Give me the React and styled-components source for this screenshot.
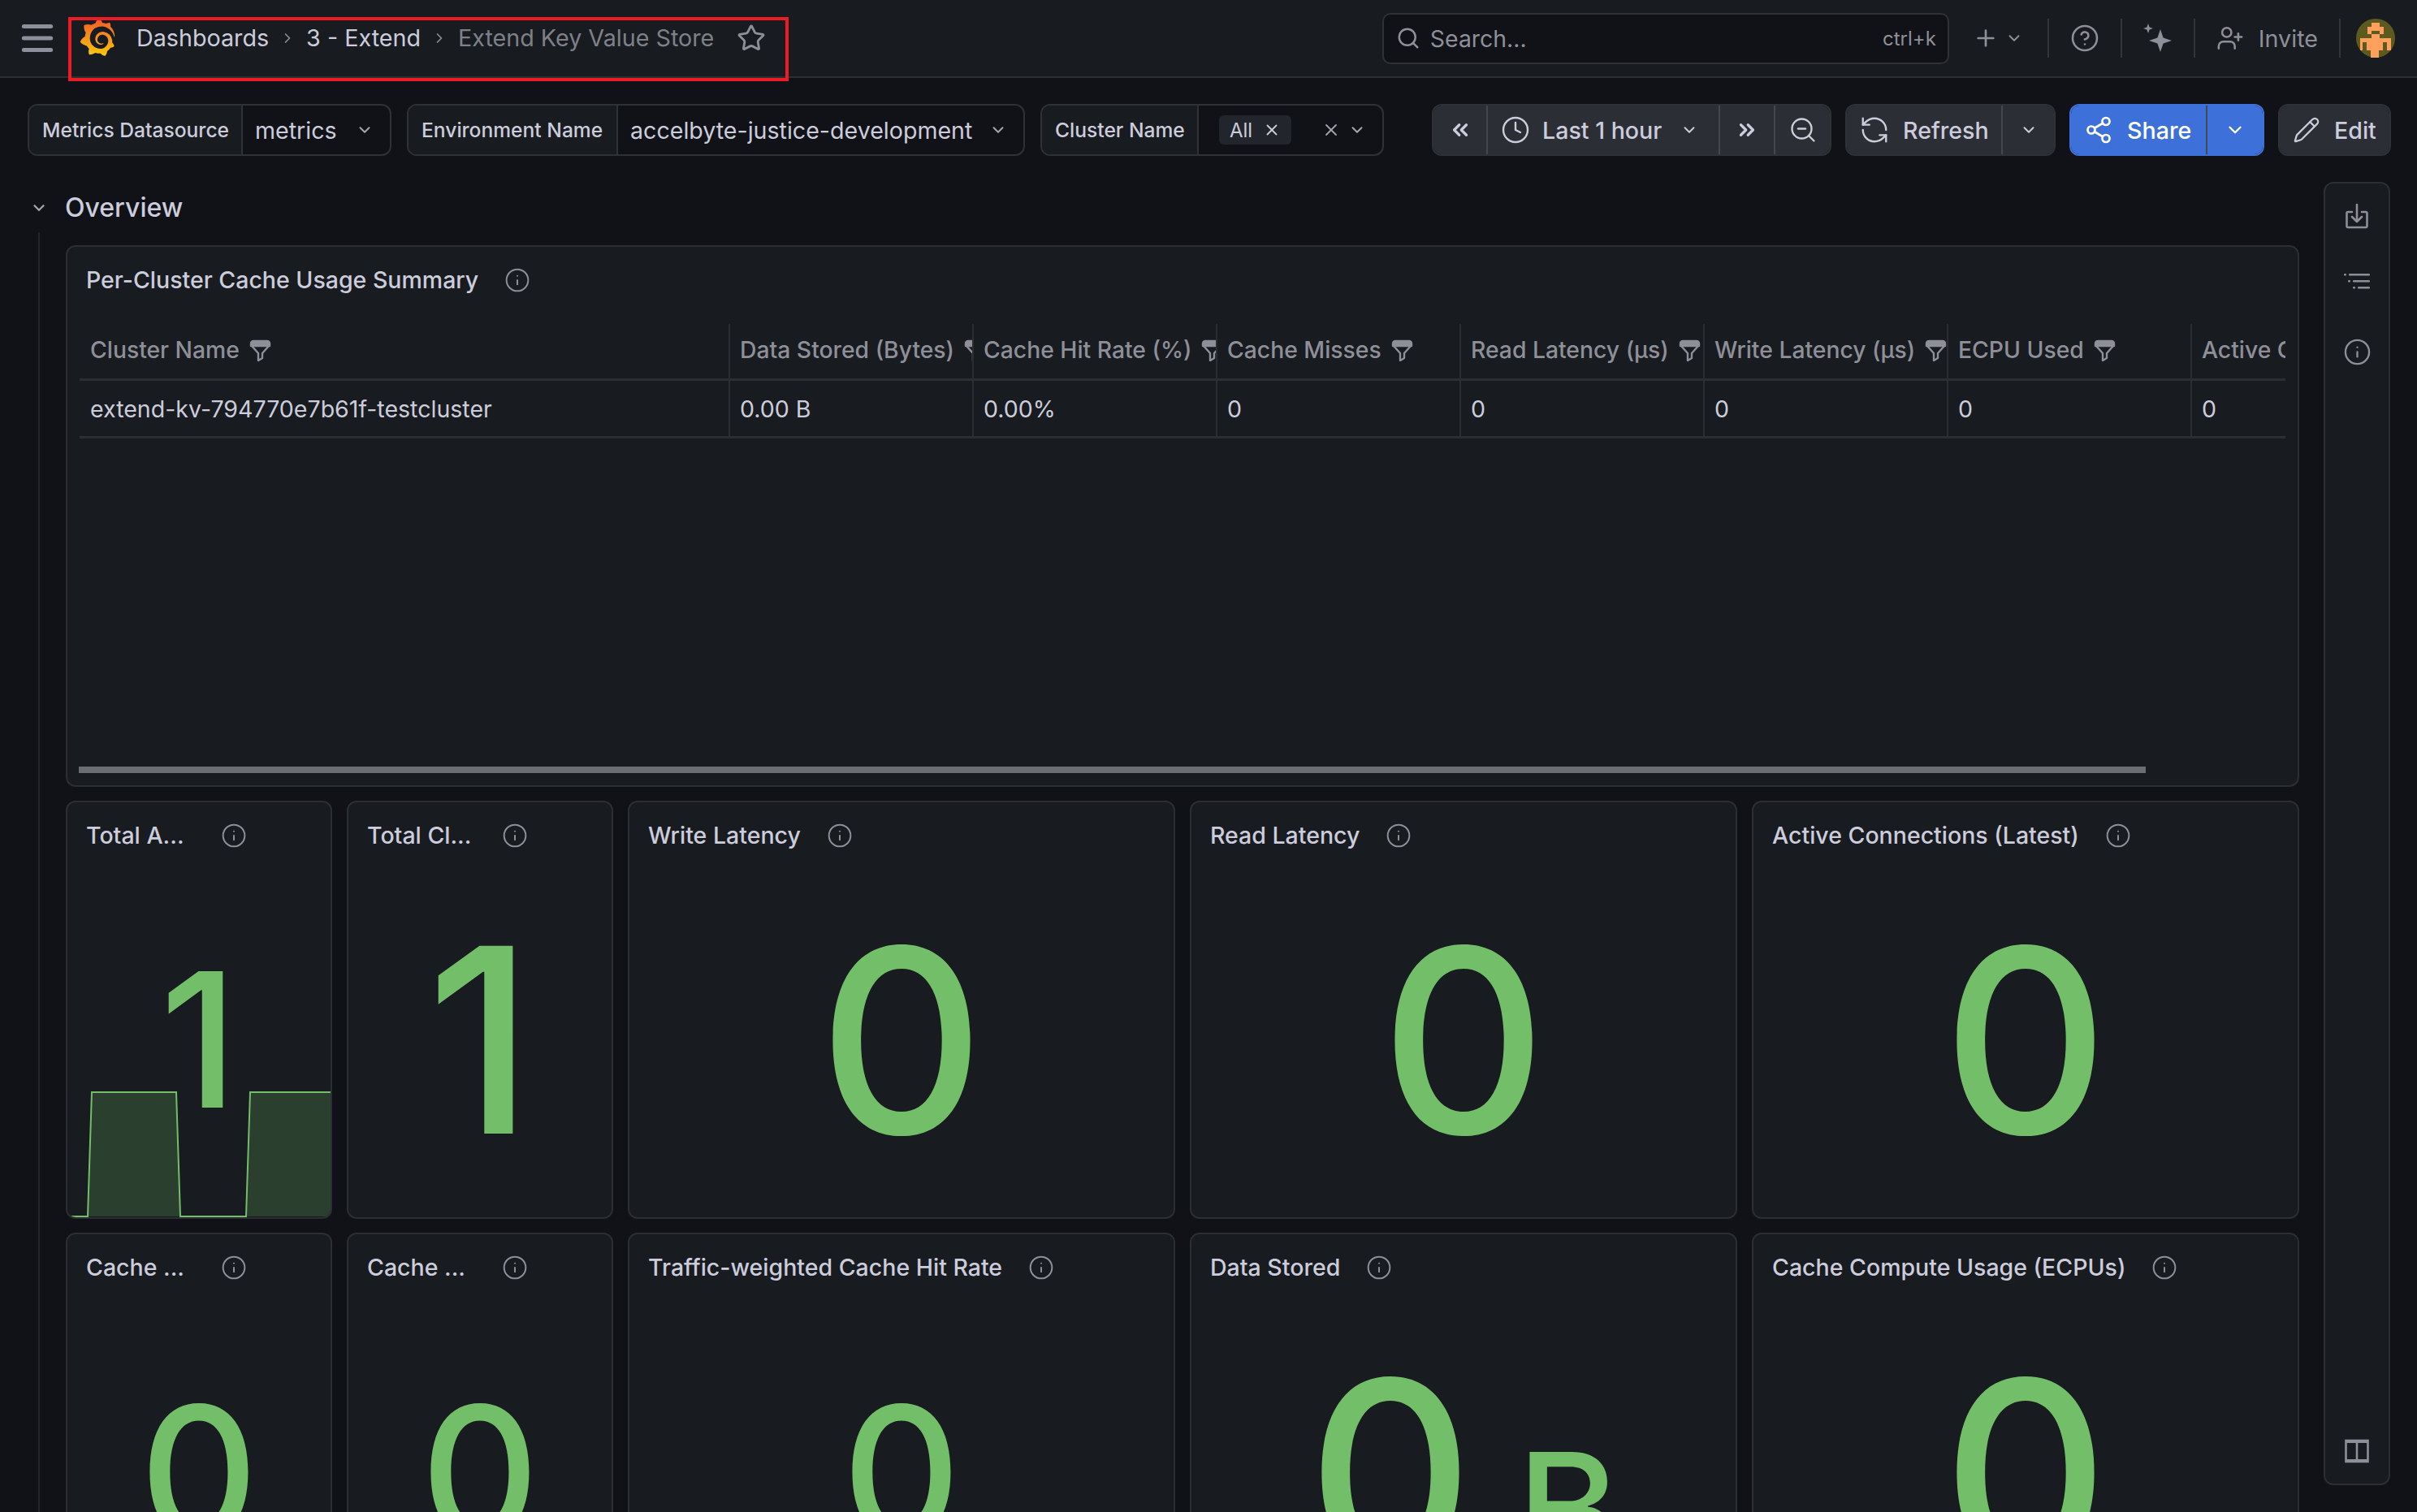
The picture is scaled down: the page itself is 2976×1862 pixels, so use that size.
import React from 'react';
import styled, { createGlobalStyle } from 'styled-components';
import { SiGrafana } from 'react-icons/si';
import {
  ChevronDown, ChevronRight, ChevronsLeft, ChevronsRight, CircleHelp, Clock, Info, Menu, Pencil,
  Plus, RefreshCcw, Search, Share2, Star, UserPlus, X, ZoomOut,
} from 'lucide-react';

const GlobalStyle = createGlobalStyle`
  html, body { margin: 0; padding: 0; background: #111217; }
  * { box-sizing: border-box; }
  body { font-family: Inter, "Noto Sans", sans-serif; color: #ccccdc; }
`;

const columns = [
  { name: 'Cluster Name', value: 'extend-kv-794770e7b61f-testcluster' },
  { name: 'Data Stored (Bytes)', value: '0.00 B' },
  { name: 'Cache Hit Rate (%)', value: '0.00%' },
  { name: 'Cache Misses', value: '0' },
  { name: 'Read Latency (µs)', value: '0' },
  { name: 'Write Latency (µs)', value: '0' },
  { name: 'ECPU Used', value: '0' },
  { name: 'Active Connections', value: '0', noFilter: true },
];

const FunnelIcon = () => (
  <FunnelSvg viewBox="0 0 27 27" fill="none" stroke="#8e8f99" strokeWidth="2.4" strokeLinejoin="round">
    <path d="M2 5a3 3 0 0 1 3-3h17a3 3 0 0 1 3 3v3H2z" fill="#8e8f99" />
    <path d="M3 8l8 9v9l5-3v-6l8-9" />
  </FunnelSvg>
);

const ExportIcon = () => (
  <svg width="28" height="32" viewBox="0 0 28 32" fill="none" stroke="#8e8f99" strokeWidth="2.6" strokeLinejoin="round" strokeLinecap="round">
    <path d="M8 11H3a1.5 1.5 0 0 0-1.5 1.5v16A1.5 1.5 0 0 0 3 30h22a1.5 1.5 0 0 0 1.5-1.5v-16A1.5 1.5 0 0 0 25 11h-5" />
    <path d="M14 2v21M8 17l6 6 6-6" />
  </svg>
);

const ListIcon = () => (
  <svg width="32" height="20" viewBox="0 0 32 20" fill="#8e8f99">
    <rect x="0" y="1" width="3" height="2.6" rx="1" />
    <rect x="6" y="1" width="26" height="2.6" rx="1" />
    <rect x="5" y="9" width="3" height="2.6" rx="1" />
    <rect x="11" y="9" width="21" height="2.6" rx="1" />
    <rect x="11" y="17" width="3" height="2.6" rx="1" />
    <rect x="17" y="17" width="15" height="2.6" rx="1" />
  </svg>
);

const PanelToggleIcon = () => (
  <svg width="30" height="30" viewBox="0 0 30 30" fill="none" stroke="#8e8f99" strokeWidth="2.6">
    <rect x="1.5" y="2" width="27" height="26" />
    <path d="M15 2v26" />
    <path d="M1.5 3h27M1.5 27h27" strokeWidth="4" />
  </svg>
);

const SparkleIcon = () => (
  <svg width="36" height="36" viewBox="0 0 36 36" fill="#8e8f99">
    <path d="M6 0l1.6 4.4L12 6 7.6 7.6 6 12 4.4 7.6 0 6l4.4-1.6z" />
    <path d="M21 7l3.6 10.4L35 21l-10.4 3.6L21 35l-3.6-10.4L7 21l10.4-3.6z" />
  </svg>
);

const AvatarIcon = () => (
  <svg width="48" height="48" viewBox="0 0 48 48">
    <circle cx="24" cy="24" r="24" fill="#5c5a1e" />
    <g fill="#ffa05c">
      <path d="M19 5h10v5h5v9h-5v-4h-10v4h-5v-9h5z" />
      <path d="M5 24h14v-5h10v5h14v15h-5v-10h-5v10h-5v9h-10v-9h-5v-10h-5v10h-3z" />
    </g>
  </svg>
);

const InfoMark = () => (
  <InfoSlot>
    <Info size={32} strokeWidth={1.5} color="#8e8f99" />
  </InfoSlot>
);

const Chevron = ({ size = 22, color = '#a4a5ad' }) => (
  <ChevronDown size={size} strokeWidth={2.2} color={color} />
);

const Sparkline = () => (
  <SparkSvg viewBox="0 0 324 156" preserveAspectRatio="none">
    <path d="M25 155L30 2H134L139 155ZM220 155L225 2H324V155Z" fill="#73bf69" fillOpacity="0.22" />
    <path d="M5 155H25L30 2H134L139 155H220L225 2H324" fill="none" stroke="#73bf69" strokeWidth="2" />
  </SparkSvg>
);

const StatPanel = ({ title, clipped, size, value = '0', unit, spark }) => (
  <Panel>
    <PanelHeader>
      <PanelTitle $clipped={clipped}>{title}</PanelTitle>
      <InfoMark />
    </PanelHeader>
    <ValueArea>
      <Value $size={size}>
        {value}
        {unit && <Unit>{unit}</Unit>}
      </Value>
    </ValueArea>
    {spark && <Sparkline />}
  </Panel>
);

export default function App() {
  return (
    <Page>
      <GlobalStyle />
      <svg width="0" height="0" style={{ position: 'absolute' }}>
        <defs>
          <linearGradient id="grafanaGrad" x1="0" y1="0" x2="0" y2="1">
            <stop offset="0" stopColor="#f05a28" />
            <stop offset="1" stopColor="#fbca0a" />
          </linearGradient>
        </defs>
      </svg>

      <TopBar>
        <TopLeft>
          <Menu size={50} strokeWidth={2.4} color="#8e8f99" />
          <LogoSlot><SiGrafana size={46} fill="url(#grafanaGrad)" /></LogoSlot>
          <Crumb>Dashboards</Crumb>
          <CrumbSep><ChevronRight size={20} strokeWidth={2} color="#8e8f99" /></CrumbSep>
          <Crumb>3 - Extend</Crumb>
          <CrumbSep><ChevronRight size={20} strokeWidth={2} color="#8e8f99" /></CrumbSep>
          <Crumb $current>Extend Key Value Store</Crumb>
          <StarSlot><Star size={36} strokeWidth={1.9} color="#8e8f99" /></StarSlot>
        </TopLeft>
        <TopRight>
          <SearchBox>
            <Search size={30} strokeWidth={2} color="#8e8f99" />
            <SearchText>Search...</SearchText>
            <SearchKey>ctrl+k</SearchKey>
          </SearchBox>
          <PlusButton>
            <Plus size={32} strokeWidth={2} color="#8e8f99" />
            <Chevron color="#8e8f99" />
          </PlusButton>
          <TopDivider />
          <TopIconSlot><CircleHelp size={36} strokeWidth={1.7} color="#8e8f99" /></TopIconSlot>
          <TopDivider />
          <TopIconSlot><SparkleIcon /></TopIconSlot>
          <TopDivider />
          <InviteButton>
            <UserPlus size={34} strokeWidth={1.8} color="#8e8f99" />
            Invite
          </InviteButton>
          <TopDivider />
          <AvatarSlot><AvatarIcon /></AvatarSlot>
        </TopRight>
      </TopBar>
      <RedBox />

      <Toolbar>
        <VarGroup>
          <VarLabel $width={263}>Metrics Datasource</VarLabel>
          <VarValue $width={181}>metrics<Chevron /></VarValue>
        </VarGroup>
        <VarGroup>
          <VarLabel $width={258}>Environment Name</VarLabel>
          <VarValue $width={499}>accelbyte-justice-development<Chevron /></VarValue>
        </VarGroup>
        <VarGroup>
          <VarLabel $width={193}>Cluster Name</VarLabel>
          <MultiValue>
            <Chip>All<X size={22} strokeWidth={2} color="#ccccdc" /></Chip>
            <MultiActions>
              <X size={24} strokeWidth={1.8} color="#a4a5ad" />
              <Chevron />
            </MultiActions>
          </MultiValue>
        </VarGroup>

        <ActionGroup>
          <ButtonGroup>
            <ButtonCell $width={65}><ChevronsLeft size={30} strokeWidth={2.6} color="#ccccdc" /></ButtonCell>
            <ButtonCell $width={286} $pad={16} $gap={15}>
              <Clock size={36} strokeWidth={1.6} color="#ccccdc" />
              <ButtonText $after={8}>Last 1 hour</ButtonText>
              <Chevron color="#ccccdc" />
            </ButtonCell>
            <ButtonCell $width={68}><ChevronsRight size={30} strokeWidth={2.6} color="#ccccdc" /></ButtonCell>
            <ButtonCell $width={69}><ZoomOut size={36} strokeWidth={1.6} color="#ccccdc" /></ButtonCell>
          </ButtonGroup>
          <ButtonGroup>
            <ButtonCell $width={190} $pad={15} $gap={16}>
              <RefreshCcw size={38} strokeWidth={1.5} color="#ccccdc" />
              <ButtonText>Refresh</ButtonText>
            </ButtonCell>
            <ButtonCell $width={65}><Chevron color="#ccccdc" /></ButtonCell>
          </ButtonGroup>
          <ButtonGroup $primary>
            <ButtonCell $width={166} $primary $pad={16} $gap={17}>
              <Share2 size={36} strokeWidth={1.8} color="#ffffff" />
              <ButtonText>Share</ButtonText>
            </ButtonCell>
            <ButtonCell $width={70} $primary><Chevron size={26} color="#ffffff" /></ButtonCell>
          </ButtonGroup>
          <ButtonGroup>
            <ButtonCell $width={135} $pad={16} $gap={17}>
              <Pencil size={34} strokeWidth={1.6} color="#ccccdc" />
              <ButtonText>Edit</ButtonText>
            </ButtonCell>
          </ButtonGroup>
        </ActionGroup>
      </Toolbar>

      <Body>
        <Main>
          <RowHeading>
            <ChevronDown size={22} strokeWidth={2.4} color="#a4a5ad" />
            <RowTitle>Overview</RowTitle>
          </RowHeading>
          <RowContent>
            <TablePanel>
              <PanelHeader>
                <PanelTitle>Per-Cluster Cache Usage Summary</PanelTitle>
                <InfoMark />
              </PanelHeader>
              <Table>
                {columns.map((col) => (
                  <HeaderCell key={col.name}>
                    {col.name}
                    {!col.noFilter && <FunnelIcon />}
                  </HeaderCell>
                ))}
                {columns.map((col) => (
                  <Cell key={col.name}>{col.value}</Cell>
                ))}
              </Table>
              <ScrollThumb />
            </TablePanel>
            <StatGrid>
              <StatPanel title="Total A..." clipped size={231} value="1" spark />
              <StatPanel title="Total Cl..." clipped size={318} value="1" />
              <StatPanel title="Write Latency" size={316} />
              <StatPanel title="Read Latency" size={316} />
              <StatPanel title="Active Connections (Latest)" size={316} />
              <StatPanel title="Cache ..." clipped size={226} />
              <StatPanel title="Cache ..." clipped size={226} />
              <StatPanel title="Traffic-weighted Cache Hit Rate" size={226} />
              <StatPanel title="Data Stored" size={316} unit="B" />
              <StatPanel title="Cache Compute Usage (ECPUs)" size={316} />
            </StatGrid>
          </RowContent>
        </Main>
        <SideRail>
          <RailIcon $top={0}><ExportIcon /></RailIcon>
          <RailIcon $top={54}><ListIcon /></RailIcon>
          <RailIcon $top={60}><Info size={35} strokeWidth={1.6} color="#8e8f99" /></RailIcon>
          <RailBottom><PanelToggleIcon /></RailBottom>
        </SideRail>
      </Body>
    </Page>
  );
}

const Page = styled.div`
  position: relative;
  width: 2976px;
  height: 1862px;
  overflow: hidden;
  background: #111217;
  display: flex;
  flex-direction: column;
`;

const TopBar = styled.header`
  height: 96px;
  flex: none;
  background: #181b1f;
  border-bottom: 2px solid #2c2e33;
  display: flex;
  align-items: center;
  justify-content: space-between;
  padding: 0 27px 0 21px;
`;

const TopLeft = styled.div`
  display: flex;
  align-items: center;
`;

const TopRight = styled.div`
  display: flex;
  align-items: center;
`;

const LogoSlot = styled.div`
  display: flex;
  margin: -2px 25px 0 26px;
`;

const Crumb = styled.span`
  font-size: 28.7px;
  line-height: 34px;
  color: ${(p) => (p.$current ? '#7f8089' : '#ccccdc')};
`;

const CrumbSep = styled.span`
  display: flex;
  margin: 0 13px;
`;

const StarSlot = styled.span`
  display: flex;
  margin-left: 28px;
`;

const RedBox = styled.div`
  position: absolute;
  left: 84px;
  top: 21px;
  width: 887px;
  height: 79px;
  border: 4px solid #ed1c24;
  pointer-events: none;
`;

const SearchBox = styled.div`
  width: 698px;
  height: 63px;
  background: #111217;
  border: 2px solid #2f3136;
  border-radius: 10px;
  display: flex;
  align-items: center;
  padding: 0 14px 0 15px;
`;

const SearchText = styled.span`
  flex: 1;
  margin-left: 12px;
  font-size: 28.4px;
  color: #8e8f99;
`;

const SearchKey = styled.span`
  font-size: 24px;
  color: #8e8f99;
`;

const PlusButton = styled.div`
  display: flex;
  align-items: center;
  gap: 8px;
  margin-left: 29px;
  width: 78px;
`;

const TopDivider = styled.div`
  width: 2px;
  height: 48px;
  background: #33353a;
  margin: 0 14px;
`;

const TopIconSlot = styled.div`
  width: 60px;
  display: flex;
  justify-content: center;
`;

const InviteButton = styled.div`
  display: flex;
  align-items: center;
  gap: 18px;
  margin-left: 12px;
  margin-right: 12px;
  font-size: 28.7px;
  color: #8e8f99;
`;

const AvatarSlot = styled.div`
  display: flex;
  margin-left: 5px;
`;

const Toolbar = styled.div`
  height: 96px;
  flex: none;
  padding: 32px 32px 0 34px;
  display: flex;
  align-items: flex-start;
  gap: 19px;
`;

const VarGroup = styled.div`
  height: 64px;
  flex: none;
  display: flex;
  border: 2px solid #2f3136;
  border-radius: 12px;
  overflow: hidden;
`;

const VarLabel = styled.div`
  width: ${(p) => p.$width}px;
  background: #181b1f;
  border-right: 2px solid #2f3136;
  display: flex;
  align-items: center;
  padding-left: 16px;
  font-size: 24.6px;
  font-weight: 500;
  white-space: nowrap;
`;

const VarValue = styled.div`
  width: ${(p) => p.$width}px;
  display: flex;
  align-items: center;
  justify-content: space-between;
  padding: 0 20px 0 15px;
  font-size: 28.6px;
  white-space: nowrap;
`;

const MultiValue = styled.div`
  width: 226px;
  display: flex;
  align-items: center;
  justify-content: space-between;
  padding: 0 20px 0 25px;
`;

const Chip = styled.div`
  width: 89px;
  height: 36px;
  background: #22252b;
  border-radius: 6px;
  display: flex;
  align-items: center;
  justify-content: center;
  gap: 13px;
  font-size: 24px;
`;

const MultiActions = styled.div`
  display: flex;
  align-items: center;
  gap: 9px;
`;

const ActionGroup = styled.div`
  flex: none;
  margin-left: 40px;
  display: flex;
  gap: 17px;
`;

const ButtonGroup = styled.div`
  height: 64px;
  flex: none;
  display: flex;
  border: 2px solid ${(p) => (p.$primary ? '#3d71d9' : '#2f3136')};
  border-radius: 12px;
  overflow: hidden;
`;

const ButtonCell = styled.div`
  width: ${(p) => p.$width}px;
  background: ${(p) => (p.$primary ? '#3d71d9' : '#2b2e34')};
  color: ${(p) => (p.$primary ? '#ffffff' : '#ccccdc')};
  display: flex;
  align-items: center;
  justify-content: ${(p) => (p.$pad === undefined ? 'center' : 'flex-start')};
  padding-left: ${(p) => p.$pad || 0}px;
  gap: ${(p) => p.$gap || 0}px;
  font-size: 28.6px;
  font-weight: 500;
  white-space: nowrap;
  & + & {
    border-left: 2px solid ${(p) => (p.$primary ? '#5a87e0' : '#44474d')};
  }
`;

const ButtonText = styled.span`
  margin-right: ${(p) => p.$after || 0}px;
`;

const Body = styled.div`
  flex: 1;
  min-height: 0;
  display: flex;
  align-items: flex-start;
  padding-top: 32px;
`;

const Main = styled.main`
  width: 2831px;
  flex: none;
`;

const RowHeading = styled.div`
  height: 62px;
  display: flex;
  align-items: center;
  gap: 21px;
  padding: 1px 0 0 37px;
`;

const RowTitle = styled.h2`
  margin: 0;
  font-size: 32px;
  font-weight: 500;
  color: #ccccdc;
`;

const RowContent = styled.div`
  margin-left: 47px;
  border-left: 2px solid #22252b;
  padding: 16px 0 0 32px;
  display: flex;
  flex-direction: column;
  gap: 17px;
`;

const Panel = styled.section`
  position: relative;
  height: 515px;
  min-width: 0;
  background: #181b1f;
  border: 2px solid #2c2e33;
  border-radius: 12px;
  overflow: hidden;
  display: flex;
  flex-direction: column;
`;

const TablePanel = styled(Panel)`
  height: 667px;
`;

const PanelHeader = styled.div`
  height: 81px;
  flex: none;
  padding-left: 23px;
  display: flex;
  align-items: center;
`;

const PanelTitle = styled.h3`
  margin: 0;
  font-size: 28.5px;
  font-weight: 500;
  color: #ccccdc;
  white-space: nowrap;
  width: ${(p) => (p.$clipped ? '134px' : 'auto')};
`;

const InfoSlot = styled.span`
  display: flex;
  margin-left: 32px;
`;

const ValueArea = styled.div`
  flex: 1;
  display: flex;
  align-items: center;
  justify-content: center;
  padding-bottom: 7px;
`;

const Value = styled.div`
  display: flex;
  align-items: baseline;
  font-size: ${(p) => p.$size}px;
  font-weight: 500;
  line-height: 1;
  color: #73bf69;
`;

const Unit = styled.span`
  margin-left: 54px;
  font-size: 192px;
`;

const SparkSvg = styled.svg`
  position: absolute;
  left: 0;
  right: 0;
  bottom: 0;
  width: 100%;
  height: 156px;
`;

const Table = styled.div`
  margin: 14px 15px 0;
  display: grid;
  grid-template-columns: 799px repeat(6, 300px) 1fr;
  grid-template-rows: 70px 71px;
  overflow: hidden;
`;

const HeaderCell = styled.div`
  display: flex;
  align-items: center;
  gap: 12px;
  padding: 0 0 3px 12px;
  border-bottom: 3px solid #2c2e33;
  font-size: 28.3px;
  font-weight: 500;
  color: #8e8f99;
  white-space: nowrap;
  overflow: hidden;
  &:not(:first-child) {
    border-left: 2px solid #2a2d32;
  }
  &:first-child {
    padding-left: 13px;
  }
`;

const FunnelSvg = styled.svg`
  flex: none;
  width: 27px;
  height: 27px;
`;

const Cell = styled.div`
  display: flex;
  align-items: center;
  padding-left: 12px;
  border-bottom: 3px solid #2c2e33;
  border-left: 2px solid #2a2d32;
  font-size: 28.55px;
  white-space: nowrap;
  &:nth-child(9) {
    border-left: none;
    padding-left: 13px;
  }
`;

const ScrollThumb = styled.div`
  position: absolute;
  left: 14px;
  top: 640px;
  width: 2545px;
  height: 8px;
  background: #6c6e72;
`;

const StatGrid = styled.div`
  display: grid;
  grid-template-columns: 328px 328px repeat(3, 674px);
  gap: 17px 18px;
`;

const SideRail = styled.aside`
  width: 82px;
  height: 1605px;
  margin-left: 30px;
  background: #181b1f;
  border: 2px solid #2c2e33;
  border-radius: 12px;
  display: flex;
  flex-direction: column;
  align-items: center;
  padding-top: 24px;
  position: relative;
`;

const RailIcon = styled.div`
  display: flex;
  margin-top: ${(p) => p.$top}px;
`;

const RailBottom = styled.div`
  display: flex;
  margin-top: auto;
  margin-bottom: 25px;
`;
